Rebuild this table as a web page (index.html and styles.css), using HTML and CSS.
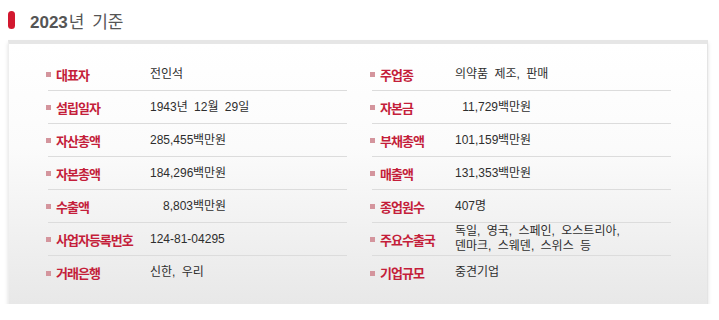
FILE: index.html
```html
<!DOCTYPE html>
<html lang="ko">
<head>
<meta charset="utf-8">
<link rel="stylesheet" href="styles.css">
</head>
<body>
<div class="head">
  <span class="pill"></span>
  <h2 class="title">2023<span class="title-ko">년 기준</span></h2>
</div>
<div class="box">
  <div class="grid">
    <div class="col left">
      <div class="row"><span class="label">대표자</span><span class="value">전인석</span></div>
      <div class="row"><span class="label">설립일자</span><span class="value">1943년 12월 29일</span></div>
      <div class="row"><span class="label">자산총액</span><span class="value"><span class="num">285,455</span>백만원</span></div>
      <div class="row"><span class="label">자본총액</span><span class="value"><span class="num">184,296</span>백만원</span></div>
      <div class="row"><span class="label">수출액</span><span class="value"><span class="num">8,803</span>백만원</span></div>
      <div class="row"><span class="label">사업자등록번호</span><span class="value">124-81-04295</span></div>
      <div class="row"><span class="label">거래은행</span><span class="value">신한, 우리</span></div>
    </div>
    <div class="col right">
      <div class="row"><span class="label">주업종</span><span class="value">의약품 제조, 판매</span></div>
      <div class="row"><span class="label">자본금</span><span class="value"><span class="num">11,729</span>백만원</span></div>
      <div class="row"><span class="label">부채총액</span><span class="value"><span class="num">101,159</span>백만원</span></div>
      <div class="row"><span class="label">매출액</span><span class="value"><span class="num">131,353</span>백만원</span></div>
      <div class="row"><span class="label">종업원수</span><span class="value">407명</span></div>
      <div class="row"><span class="label">주요수출국</span><span class="value multi">독일, 영국, 스페인, 오스트리아,<br>덴마크, 스웨덴, 스위스 등</span></div>
      <div class="row"><span class="label">기업규모</span><span class="value">중견기업</span></div>
    </div>
  </div>
</div>
</body>
</html>
```
FILE: styles.css
```css
* { box-sizing: border-box; }
body {
  margin: 0;
  background: #fff;
  font-family: "Liberation Sans", "Noto Sans CJK KR", sans-serif;
}
.head {
  height: 40px;
  display: flex;
  align-items: center;
  padding-left: 8px;
}
.pill {
  width: 7px;
  height: 18px;
  border-radius: 4px;
  background: #d2182f;
}
.title {
  margin: 0 0 0 15px;
  font-size: 17px;
  font-weight: bold;
  color: #555;
}
.title-ko {
  font-weight: normal;
  word-spacing: 3px;
  margin-left: 1px;
}
.box {
  margin-left: 8px;
  width: 700px;
  height: 264px;
  border-top: 4px solid #e6e6e6;
  border-left: 1px solid #eeeeee;
  border-right: 1px solid #e4e4e4;
  background: linear-gradient(#ffffff 0%, #fbfbfb 40%, #e8e8e8 100%);
  box-shadow: 0 3px 4px rgba(0,0,0,0.13);
  padding: 14px 0 0 39px;
}
.grid {
  display: grid;
  grid-template-columns: 299px 299px;
  column-gap: 25px;
}
.row {
  height: 33px;
  display: flex;
  align-items: center;
  border-bottom: 1px solid #dcdcdc;
}
.row:last-child { border-bottom: none; }
.label {
  position: relative;
  color: #c41e3a;
  font-weight: bold;
  font-size: 13px;
  letter-spacing: -1px;
  padding-left: 8px;
  flex: none;
}
.label::before {
  content: "";
  position: absolute;
  left: -2px;
  top: 50%;
  margin-top: -2px;
  width: 5px;
  height: 5px;
  background: #d4959d;
}
.left .label { width: 102px; }
.right .label { width: 83px; }
.value {
  font-size: 12px;
  color: #2e2e2e;
  line-height: 15px;
  word-spacing: 3px;
}
.num {
  display: inline-block;
  width: 43px;
  text-align: right;
}
```
